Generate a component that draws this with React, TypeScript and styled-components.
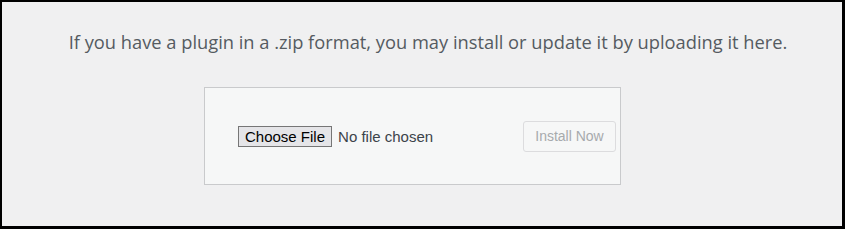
import styled, { createGlobalStyle } from "styled-components";

const GlobalStyle = createGlobalStyle`
  html, body {
    margin: 0;
    padding: 0;
    background: #000;
  }
  * {
    box-sizing: border-box;
  }
`;

const Frame = styled.div`
  width: 845px;
  height: 229px;
  border-style: solid;
  border-color: #000;
  border-width: 2px 3px 3px 2px;
  background-color: #f0f0f1;
  display: flex;
  flex-direction: column;
  align-items: center;
`;

const Intro = styled.p`
  margin: 28px 0 0 12px;
  font-family: "Open Sans", "Noto Sans", sans-serif;
  font-size: 18.3px;
  line-height: 24px;
  color: #555b61;
  text-align: center;
  white-space: nowrap;
`;

const UploadBox = styled.form`
  margin: 33px 19px 0 0;
  width: 417px;
  height: 98px;
  border: 1px solid #c9cacc;
  background-color: #f6f7f7;
  display: flex;
  align-items: center;
  padding: 0 4px 0 33px;
`;

const FilePicker = styled.label`
  display: flex;
  align-items: center;
  gap: 6px;
  font-family: "Liberation Sans", Arial, sans-serif;
  font-size: 15px;
  color: #3c434a;
  cursor: pointer;
`;

const ChooseButton = styled.span`
  display: inline-flex;
  align-items: center;
  height: 21px;
  padding: 0 6px;
  border: 1px solid #767676;
  background-color: #e5e5e8;
  color: #000;
  font-size: 15px;
`;

const HiddenInput = styled.input`
  display: none;
`;

const InstallButton = styled.button`
  margin-left: auto;
  height: 31px;
  width: 93px;
  border: 1px solid #dcdcde;
  border-radius: 3px;
  background-color: #f6f7f7;
  color: #a7aaad;
  font-family: "Liberation Sans", Arial, sans-serif;
  font-size: 14px;
  cursor: default;
`;

export default function App() {
  return (
    <>
      <GlobalStyle />
      <Frame>
        <Intro>
          If you have a plugin in a .zip format, you may install or update it by uploading it here.
        </Intro>
        <UploadBox onSubmit={(e) => e.preventDefault()}>
          <FilePicker>
            <HiddenInput type="file" accept=".zip" />
            <ChooseButton>Choose File</ChooseButton>
            No file chosen
          </FilePicker>
          <InstallButton type="submit" disabled>
            Install Now
          </InstallButton>
        </UploadBox>
      </Frame>
    </>
  );
}
